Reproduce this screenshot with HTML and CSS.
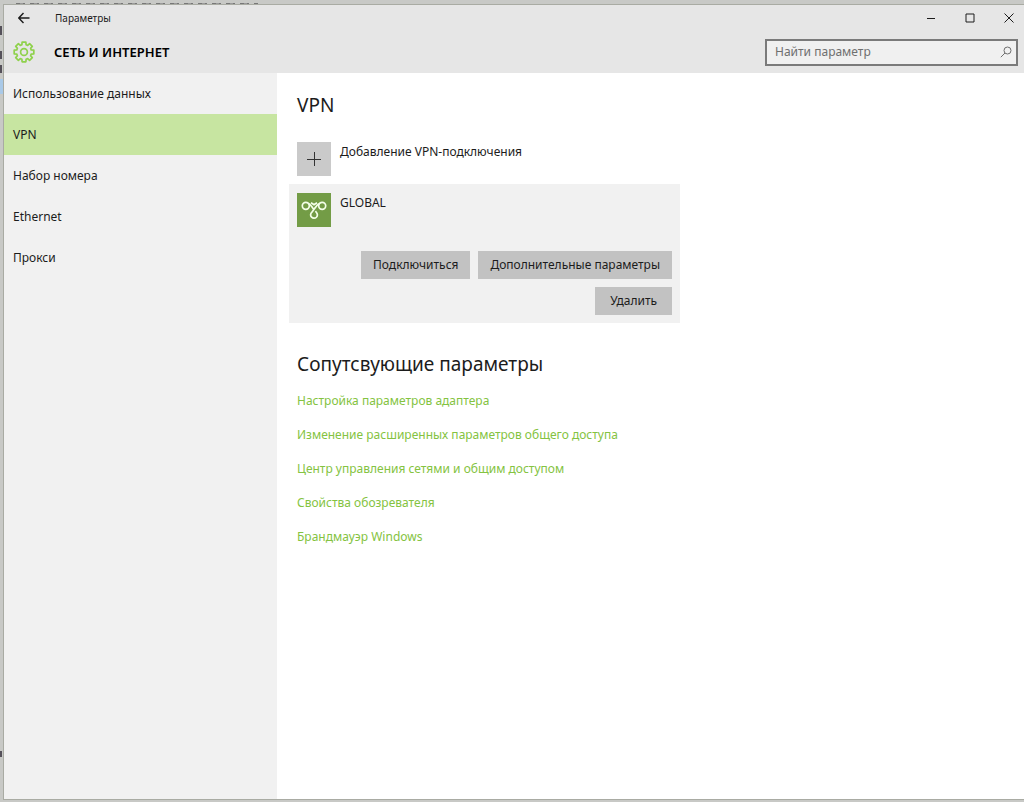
FILE: index.html
```html
<!DOCTYPE html>
<html lang="ru">
<head>
<meta charset="utf-8">
<title>Параметры</title>
<meta name="viewport" content="width=device-width, initial-scale=1">
<link rel="stylesheet" href="styles.css">
</head>
<body>
<div class="backdrop" aria-hidden="true">
  <i class="fragment fragment-menu"></i>
  <i class="fragment fragment-a"></i>
  <i class="fragment fragment-b"></i>
  <i class="fragment fragment-c"></i>
  <i class="fragment fragment-selection"></i>
  <i class="fragment fragment-d"></i>
</div>
<div class="window">
  <header class="header">
    <div class="titlebar">
      <button class="back" type="button" aria-label="Назад">
        <svg width="12" height="12" viewBox="0 0 12 12"><path d="M11.500 6H1M5.500 1L.8 6l4.700 5"/></svg>
      </button>
      <span class="window-title">Параметры</span>
      <div class="controls">
        <button type="button" aria-label="Свернуть"><svg width="10" height="10" viewBox="0 0 10 10"><path d="M1 5.500h8"/></svg></button>
        <button type="button" aria-label="Развернуть"><svg width="10" height="10" viewBox="0 0 10 10"><path d="M1 1h8v8H1z"/></svg></button>
        <button type="button" aria-label="Закрыть"><svg width="10" height="10" viewBox="0 0 10 10"><path d="M.5.5l9 9M9.500.5l-9 9"/></svg></button>
      </div>
    </div>
    <div class="section-bar">
      <svg class="gear" width="22" height="22" viewBox="-11 -11 22 22"><path d="M-1.900-9.800H1.900L2.100-7.200 3.700-6.600 5.600-8.300 8.300-5.600 6.600-3.700 7.200-2.100 9.800-1.900V1.900L7.200 2.100 6.600 3.700 8.300 5.600 5.600 8.300 3.700 6.600 2.100 7.200 1.900 9.800H-1.900L-2.100 7.200-3.700 6.600-5.600 8.300-8.300 5.600-6.600 3.700-7.200 2.100-9.800 1.900V-1.900L-7.200-2.100-6.600-3.700-8.300-5.600-5.600-8.300-3.700-6.600-2.100-7.200z"/><circle r="3.400"/></svg>
      <h1>СЕТЬ И ИНТЕРНЕТ</h1>
      <label class="search">
        <input type="text" placeholder="Найти параметр" aria-label="Найти параметр">
        <svg width="12" height="12" viewBox="0 0 12 12"><circle cx="7.500" cy="4.500" r="3.500"/><path d="M5 7L.8 11.200"/></svg>
      </label>
    </div>
  </header>
  <div class="body">
    <nav class="sidebar">
      <a href="#data">Использование данных</a>
      <a href="#vpn" class="active" aria-current="page">VPN</a>
      <a href="#dialup">Набор номера</a>
      <a href="#ethernet">Ethernet</a>
      <a href="#proxy">Прокси</a>
    </nav>
    <main class="content">
      <h2>VPN</h2>
      <button class="item add" type="button">
        <span class="tile"><svg width="34" height="34" viewBox="0 0 34 34"><path d="M10 17.500h14M17.500 10v14"/></svg></span>
        <span>Добавление VPN-подключения</span>
      </button>
      <section class="card">
        <div class="item">
          <span class="tile tile-vpn"><svg width="34" height="34" viewBox="0 0 34 34"><circle cx="8.800" cy="12.800" r="3.500"/><circle cx="25.200" cy="12.800" r="3.500"/><path d="M11.200 10.200c2.600 1 3.400 3.400 5.300 5.800M22.800 10.200c-3.300 1.400-4.600 5.200-7.500 8.400-1 1-1.700 2-1.700 3.200a3.400 3.400 0 0 0 6.800 0c0-1.400-.9-2.400-2-3.700M14 9.800l3 2 3-2"/></svg></span>
          <span>GLOBAL</span>
        </div>
        <div class="actions">
          <button class="wide" type="button">Подключиться</button>
          <button class="wide" type="button">Дополнительные параметры</button>
          <button type="button">Удалить</button>
        </div>
      </section>
      <h2>Сопутсвующие параметры</h2>
      <ul class="links">
        <li><a href="#adapter">Настройка параметров адаптера</a></li>
        <li><a href="#sharing">Изменение расширенных параметров общего доступа</a></li>
        <li><a href="#center">Центр управления сетями и общим доступом</a></li>
        <li><a href="#browser">Свойства обозревателя</a></li>
        <li><a href="#firewall">Брандмауэр Windows</a></li>
      </ul>
    </main>
  </div>
</div>
</body>
</html>
```
FILE: styles.css
```css
* { box-sizing: border-box; }
body {
  margin: 0;
  min-height: 100vh;
  display: flex;
  padding: 4px 0 2px 3px;
  background: #c8c9c6;
  color: #1c1c1c;
  font: 12px/20px "Noto Sans", "Open Sans", sans-serif;
}
button, input { font: inherit; color: inherit; }
button { border: 0; padding: 0; background: none; }
svg { fill: none; stroke: currentColor; display: block; }
h1, h2 { margin: 0; }

/* Parts of the windows behind this one */
.fragment { position: absolute; left: 0; width: 2px; background: #55515a; }
.fragment-menu {
  left: 16px; top: 3px; width: 242px; height: 1px;
  background: repeating-linear-gradient(90deg, #777 0 4px, #999 4px 7px, #777 7px 9px, #c8c9c6 9px 14px);
}
.fragment-a { top: 26px; height: 9px; }
.fragment-b { top: 51px; height: 8px; }
.fragment-c { top: 65px; height: 8px; }
.fragment-selection { top: 79px; height: 15px; width: 3px; background: #a9c9e8; }
.fragment-d { top: 751px; height: 6px; }

.window {
  flex: 1;
  min-width: 0;
  display: flex;
  flex-direction: column;
  border: 1px solid #a9aba3;
  border-right: 0;
  background: #fff;
}
.header { background: #e6e6e6; }
.titlebar { display: flex; align-items: center; height: 26px; font-size: 10px; }
.back { width: 40px; height: 26px; display: grid; place-items: center; }
.back svg { stroke-width: 1.4; }
.window-title { margin-left: 11px; }
.controls { margin-left: auto; display: flex; }
.controls button { width: 39px; height: 26px; display: grid; place-items: center; }
.controls button:last-child { margin-right: -4px; }
.section-bar { display: flex; align-items: center; height: 42px; padding: 0 6px 0 9px; }
.gear { color: #8fd14c; stroke-width: 1.7; stroke-linejoin: round; }
h1 { margin-left: 19px; font-size: 13px; font-weight: 600; color: #000; }
.search {
  margin-left: auto;
  width: 253px;
  height: 27px;
  display: flex;
  align-items: center;
  padding: 0 4px 0 8px;
  border: 2px solid #7a7a7a;
  background: #f0f0f0;
  color: #6f6f6f;
}
.search input { flex: 1; min-width: 0; border: 0; padding: 0; background: none; outline: 0; }
.search input::placeholder { color: #6f6f6f; opacity: 1; }

.body { flex: 1; display: flex; }
.sidebar { width: 273px; flex: none; background: #f1f1f1; }
.sidebar a {
  display: flex;
  align-items: center;
  height: 41px;
  padding-left: 9px;
  color: inherit;
  text-decoration: none;
}
.sidebar .active { background: #c7e5a1; }

.content { flex: 1; min-width: 0; padding: 19px 12px; }
h2 { padding-left: 8px; font-size: 19px; line-height: 26px; font-weight: 400; }
.item { display: flex; gap: 9px; text-align: left; }
.add { margin: 24px 0 8px 8px; }
.tile { width: 34px; height: 34px; background: #cacaca; color: #333; }
.tile-vpn { background: #739c46; color: #f4ffe8; }
.tile-vpn svg { stroke-width: 1.7; }
.card { max-width: 391px; padding: 9px 8px 8px; background: #f1f1f1; margin-bottom: 28px; }
.actions { display: flex; flex-wrap: wrap; justify-content: flex-end; gap: 8px; margin-top: 24px; }
.actions button { height: 28px; padding: 0 15px; background: #c2c2c2; }
.actions .wide { padding: 0 12px; }
.links { list-style: none; margin: 14px 0 0; padding: 0 0 0 8px; display: grid; gap: 14px; }
.links a { color: #84c341; text-decoration: none; }
```
